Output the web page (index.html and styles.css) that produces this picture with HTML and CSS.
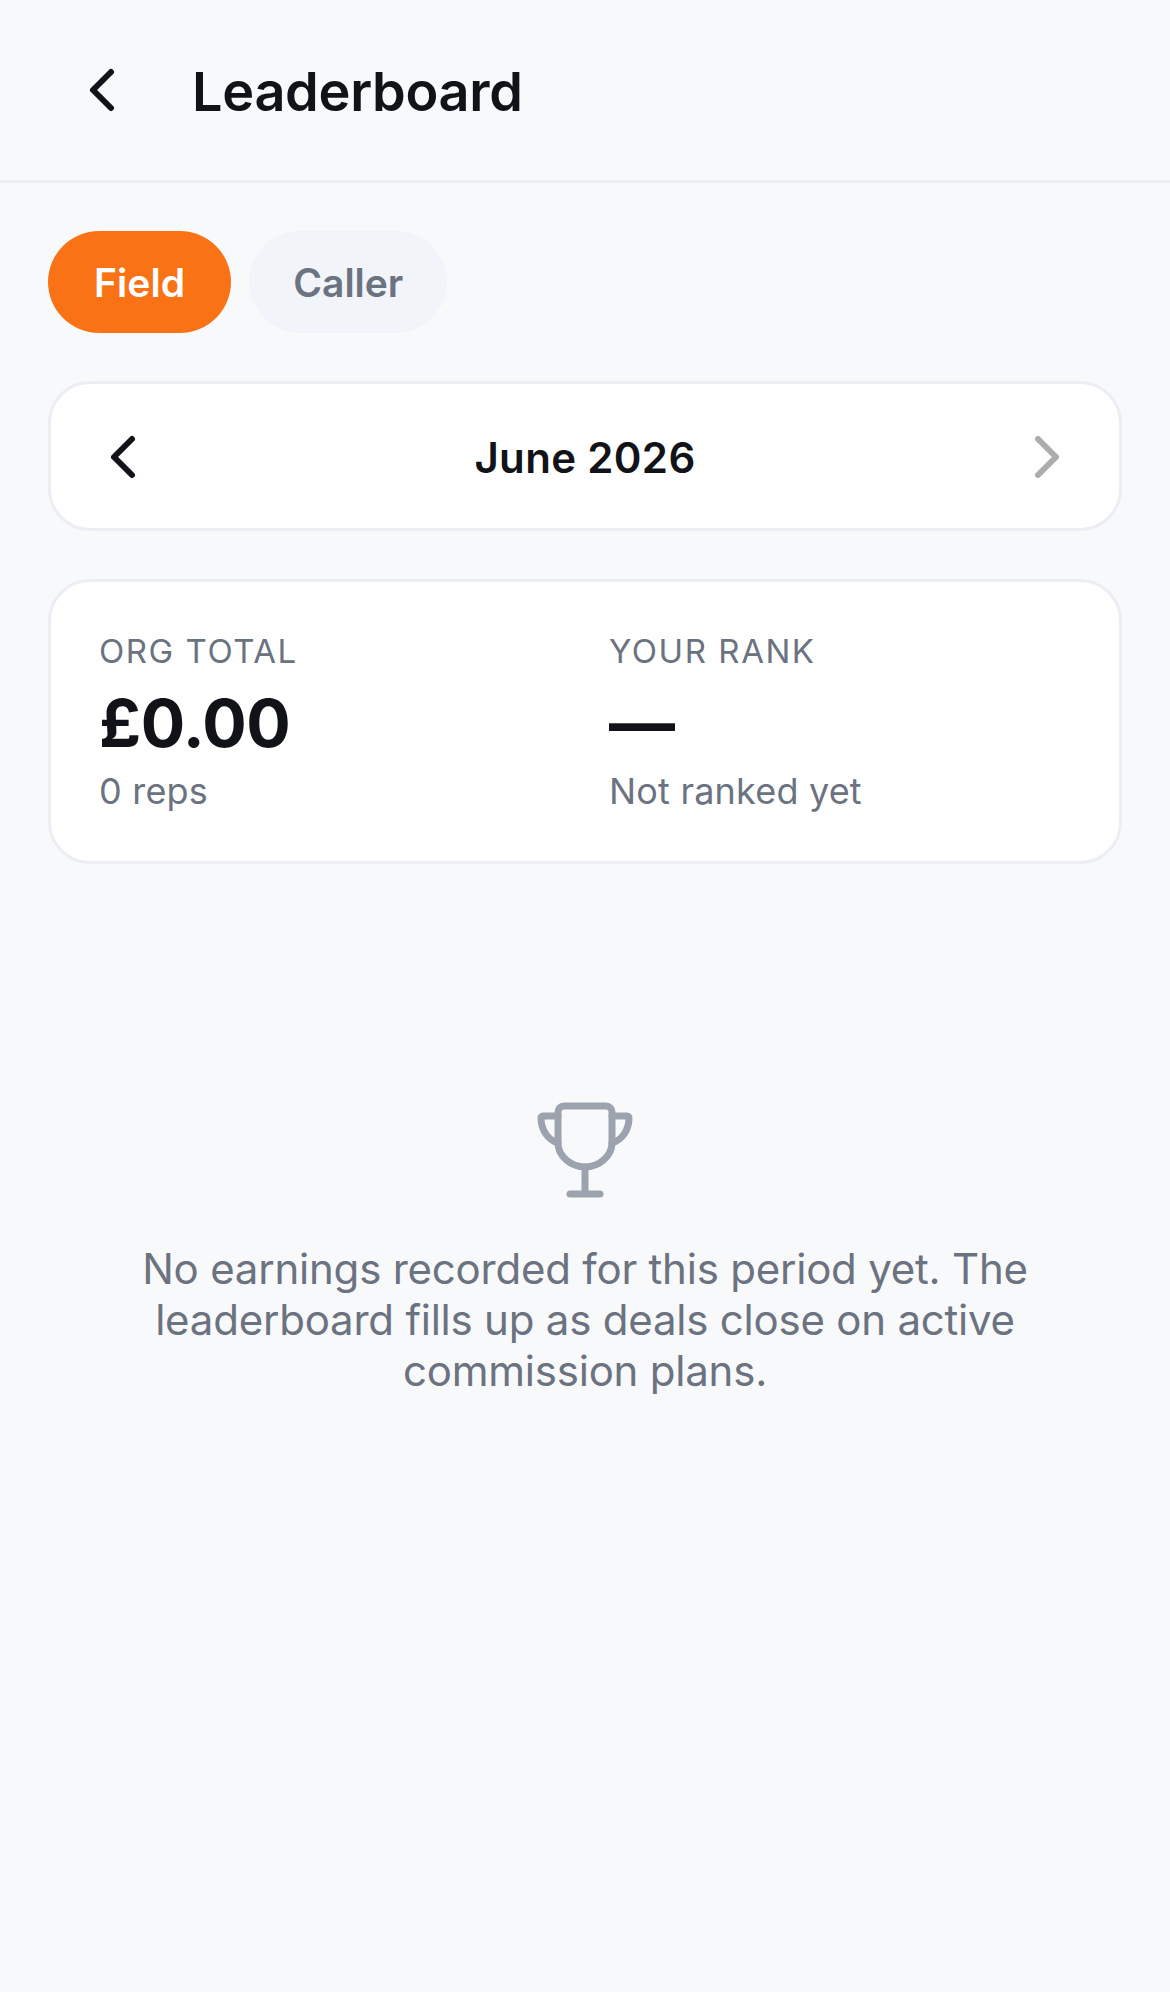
FILE: index.html
```html
<!DOCTYPE html>
<html lang="en">
<head>
<meta charset="utf-8">
<title>Leaderboard</title>
<link rel="stylesheet" href="styles.css">
</head>
<body>
<header class="topbar">
  <button class="back" aria-label="Back">
    <svg class="chev" viewBox="0 0 48 48"><path d="M33 6 15 24l18 18"/></svg>
  </button>
  <h1 class="title">Leaderboard</h1>
</header>
<main class="content">
  <div class="tabs">
    <span class="tab tab-active">Field</span>
    <span class="tab">Caller</span>
  </div>
  <section class="card month">
    <svg class="chev" viewBox="0 0 48 48"><path d="M33 6 15 24l18 18"/></svg>
    <span class="month-name">June 2026</span>
    <svg class="chev chev-off" viewBox="0 0 48 48"><path d="M15 6l18 18-18 18"/></svg>
  </section>
  <section class="card stats">
    <div class="stat">
      <div class="stat-label">ORG TOTAL</div>
      <div class="stat-value">£0.00</div>
      <div class="stat-note">0 reps</div>
    </div>
    <div class="stat">
      <div class="stat-label">YOUR RANK</div>
      <div class="stat-value">—</div>
      <div class="stat-note">Not ranked yet</div>
    </div>
  </section>
  <section class="empty">
    <svg class="trophy" viewBox="0 0 96 96">
      <path d="M21 41V10a6 6 0 0 1 6-6h42a6 6 0 0 1 6 6v31c0 13-13 24-27 24S21 54 21 41Z"/>
      <path d="M48 65v27M33 92h30"/>
      <path d="M21 14H6a2 2 0 0 0-2 2c0 12 7 22 17 25M75 14h15a2 2 0 0 1 2 2c0 12-7 22-17 25"/>
    </svg>
    <p class="empty-text">No earnings recorded for this period yet. The leaderboard fills up as deals close on active commission plans.</p>
  </section>
</main>
</body>
</html>
```
FILE: styles.css
```css
* { box-sizing: border-box; }

html, body {
  margin: 0;
  background: #f8f9fb;
}

body {
  font-family: Inter, "Noto Sans", sans-serif;
  color: #111318;
  min-height: 1992px;
}

.topbar {
  display: flex;
  align-items: center;
  height: 183px;
  padding: 0 48px;
  border-bottom: 3px solid #eceef4;
}

.back {
  display: flex;
  justify-content: center;
  width: 108px;
  margin-right: 36px;
  padding: 0;
  border: 0;
  background: none;
}

.title {
  margin: 0;
  padding-top: 4px;
  font-size: 54px;
  font-weight: 600;
  line-height: 1.2;
  letter-spacing: -0.3px;
}

.chev {
  display: block;
  width: 48px;
  height: 48px;
  fill: none;
  stroke: #111318;
  stroke-width: 6;
  stroke-linecap: round;
  stroke-linejoin: round;
}

.chev-off { opacity: 0.35; }

.content {
  display: flex;
  flex-direction: column;
  gap: 48px;
  padding: 48px;
}

.tabs {
  display: flex;
  gap: 18px;
}

.tab {
  display: flex;
  align-items: center;
  height: 102px;
  padding: 0 44px;
  border-radius: 51px;
  background: #f1f4f9;
  color: #6b7280;
  font-size: 39px;
  font-weight: 600;
}

.tab-active {
  padding: 0 46px;
  background: #f97316;
  color: #fff;
  letter-spacing: 0.1px;
}

.card {
  background: #fff;
  border: 3px solid #eceef4;
  border-radius: 42px;
}

.month {
  display: flex;
  align-items: center;
  justify-content: space-between;
  height: 150px;
  padding: 2px 48px 0;
}

.month-name {
  font-size: 42px;
  font-weight: 600;
  letter-spacing: 0.35px;
}

.stats {
  display: grid;
  grid-template-columns: 1fr 1fr;
  gap: 48px;
  height: 285px;
  padding: 50px 48px 48px;
}

.stat-label {
  color: #6b7280;
  font-size: 33px;
  line-height: 1.2;
  letter-spacing: 1.55px;
}

.stat-value {
  margin-top: 12px;
  font-size: 66px;
  font-weight: 700;
  line-height: 1.2;
  letter-spacing: -0.5px;
}

.stat-note {
  margin-top: 7px;
  color: #6b7280;
  font-size: 36px;
  line-height: 1.2;
  letter-spacing: 0.2px;
}

.empty {
  display: flex;
  flex-direction: column;
  align-items: center;
  gap: 42px;
  margin-top: 190px;
  padding: 0 72px;
}

.trophy {
  display: block;
  width: 96px;
  height: 96px;
  fill: none;
  stroke: #9ca3af;
  stroke-width: 7;
  stroke-linecap: round;
  stroke-linejoin: round;
}

.empty-text {
  margin: 0;
  padding-top: 3px;
  color: #6b7280;
  font-size: 42px;
  line-height: 51px;
  letter-spacing: -0.22px;
  text-align: center;
}
```
